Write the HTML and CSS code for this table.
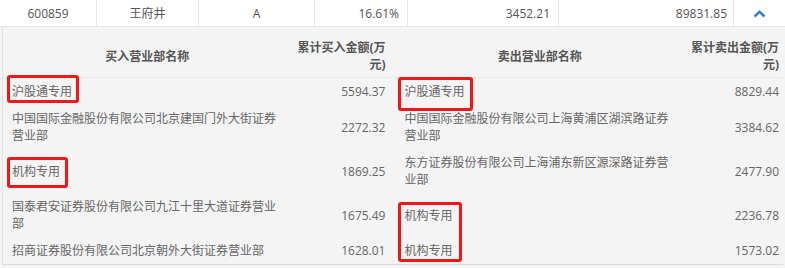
FILE: index.html
```html
<!DOCTYPE html>
<html lang="zh-CN">
<head>
<meta charset="utf-8">
<title>龙虎榜明细</title>
<link rel="stylesheet" href="styles.css">
</head>
<body>
<div class="page">
  <div class="summary">
    <div class="cell center">600859</div>
    <div class="cell center">王府井</div>
    <div class="cell center">A</div>
    <div class="cell right">16.61%</div>
    <div class="cell right">3452.21</div>
    <div class="cell right r6">89831.85</div>
    <div class="cell center toggle">
      <svg width="13" height="8" viewBox="0 0 13 8"><polyline points="1.5,6.5 6.5,1.8 11.5,6.5" fill="none" stroke="#3b7fd4" stroke-width="2.6" stroke-linejoin="miter"/></svg>
    </div>
  </div>
  <div class="detail">
    <table class="deals">
      <colgroup>
        <col class="c-bname"><col class="c-bamt"><col class="c-sname"><col class="c-samt">
      </colgroup>
      <thead>
        <tr>
          <th class="bname">买入营业部名称</th>
          <th class="bamt">累计买入金额(万元)</th>
          <th class="sname">卖出营业部名称</th>
          <th class="samt">累计卖出金额(万元)</th>
        </tr>
      </thead>
      <tbody>
        <tr>
          <td class="bname">沪股通专用</td><td class="bamt">5594.37</td>
          <td class="sname">沪股通专用</td><td class="samt">8829.44</td>
        </tr>
        <tr>
          <td class="bname">中国国际金融股份有限公司北京建国门外大街证券营业部</td><td class="bamt">2272.32</td>
          <td class="sname">中国国际金融股份有限公司上海黄浦区湖滨路证券营业部</td><td class="samt">3384.62</td>
        </tr>
        <tr>
          <td class="bname">机构专用</td><td class="bamt">1869.25</td>
          <td class="sname">东方证券股份有限公司上海浦东新区源深路证券营业部</td><td class="samt">2477.90</td>
        </tr>
        <tr>
          <td class="bname">国泰君安证券股份有限公司九江十里大道证券营业部</td><td class="bamt">1675.49</td>
          <td class="sname">机构专用</td><td class="samt">2236.78</td>
        </tr>
        <tr>
          <td class="bname">招商证券股份有限公司北京朝外大街证券营业部</td><td class="bamt">1628.01</td>
          <td class="sname">机构专用</td><td class="samt">1573.02</td>
        </tr>
      </tbody>
    </table>
  </div>
  <div class="mark m1"></div>
  <div class="mark m2"></div>
  <div class="mark m3"></div>
  <div class="mark m4"></div>
</div>
</body>
</html>
```

FILE: styles.css
```css
* { box-sizing: border-box; }
html, body { margin: 0; padding: 0; background: #f4f4f4; }
body {
  font-family: "Open Sans", "Noto Sans CJK SC", sans-serif;
  font-size: 12px;
  color: #666;
}
.page { position: relative; width: 785px; height: 268px; overflow: hidden; }

.summary {
  display: grid;
  grid-template-columns: 97px 102px 116px 93px 151px 175px 51px;
  height: 27px;
  background: #fff;
  border-bottom: 1px solid #e6e6e6;
}
.cell {
  display: flex;
  align-items: center;
  border-right: 1px solid #e8e8e8;
  color: #555;
  line-height: 17px;
  white-space: nowrap;
}
.cell.center { justify-content: center; }
.cell.right { justify-content: flex-end; padding-right: 8px; }
.cell.r6 { padding-right: 6px; }
.cell.toggle { border-right: none; padding-top: 1px; }

.detail {
  padding: 0 2px 4px 2px;
  background: #f4f4f4;
}
.deals {
  width: 781px;
  table-layout: fixed;
  border-collapse: separate;
  border-spacing: 0;
  border-left: 1px solid #e2e2e2;
  border-bottom: 1px solid #dcdcdc;
}
.c-bname { width: 288px; }
.c-bamt { width: 102px; }
.c-sname { width: 288px; }
.c-samt { width: 101px; }

.deals th {
  font-weight: bold;
  color: #555;
  line-height: 17px;
  padding-top: 12px;
  padding-bottom: 4px;
  border-bottom: 1px solid #e8e8e8;
  vertical-align: middle;
}
.deals td {
  line-height: 17px;
  padding-top: 5px;
  padding-bottom: 5px;
  vertical-align: middle;
}
.bname { padding-left: 9px; padding-right: 9px; text-align: left; }
.sname { padding-left: 11px; padding-right: 7px; text-align: left; }
.bamt { padding-left: 4px; padding-right: 8px; text-align: right; }
.samt { padding-left: 4px; padding-right: 4px; text-align: right; }
th.bname, th.sname { text-align: center; }

.mark {
  position: absolute;
  border: 3px solid #f21616;
  border-radius: 3px;
}
.m1 { left: 7px; top: 75px; width: 72px; height: 28px; }
.m2 { left: 398px; top: 77px; width: 75px; height: 34px; }
.m3 { left: 7px; top: 157px; width: 61px; height: 31px; }
.m4 { left: 398px; top: 202px; width: 64px; height: 60px; }
```
